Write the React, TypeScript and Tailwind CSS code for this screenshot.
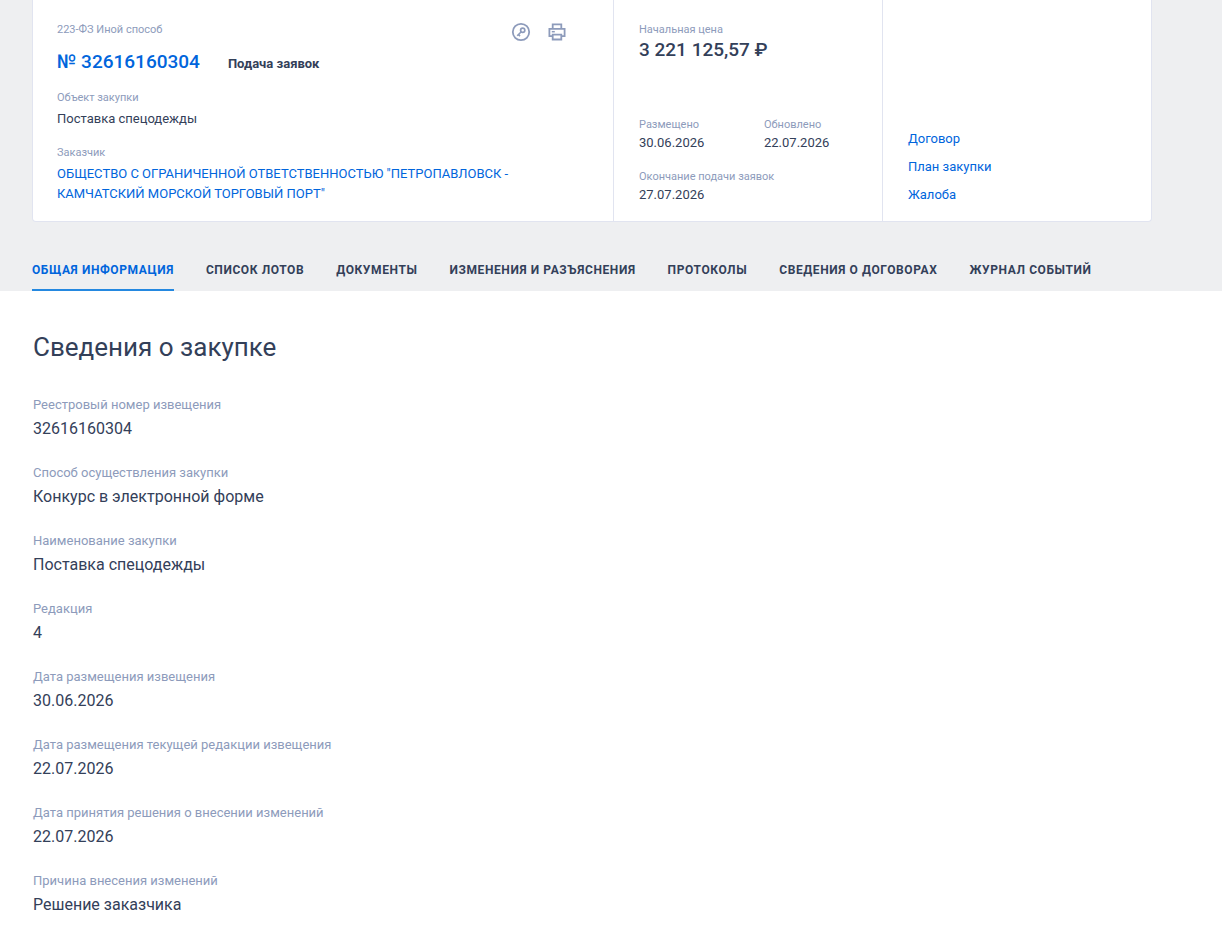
import type { ReactNode } from "react";

const tabs = [
  "Общая информация",
  "Список лотов",
  "Документы",
  "Изменения и разъяснения",
  "Протоколы",
  "Сведения о договорах",
  "Журнал событий",
];

const links = ["Договор", "План закупки", "Жалоба"];

const details = [
  { label: "Реестровый номер извещения", value: "32616160304" },
  { label: "Способ осуществления закупки", value: "Конкурс в электронной форме" },
  { label: "Наименование закупки", value: "Поставка спецодежды" },
  { label: "Редакция", value: "4" },
  { label: "Дата размещения извещения", value: "30.06.2026" },
  { label: "Дата размещения текущей редакции извещения", value: "22.07.2026" },
  { label: "Дата принятия решения о внесении изменений", value: "22.07.2026" },
  { label: "Причина внесения изменений", value: "Решение заказчика" },
];

function KeyIcon() {
  return (
    <svg width="20" height="20" viewBox="0 0 20 20" fill="none" stroke="currentColor">
      <circle cx="10" cy="10" r="8.2" strokeWidth="1.8" />
      <circle cx="11.7" cy="8.3" r="2.1" strokeWidth="1.7" />
      <path d="M10.3 9.7 6.2 13.8M7.3 12.4l1.7 1.7" strokeWidth="1.6" />
    </svg>
  );
}

function PrintIcon() {
  return (
    <svg width="20" height="20" viewBox="0 0 20 20" fill="none" stroke="currentColor" strokeWidth="1.8">
      <path d="M5.7 6.5V2.4h8.6v4.1" />
      <path d="M5.5 14.1H2.4V6.8h15.2v7.3h-3.1" />
      <path d="M5.7 12.6h8.6v4.9H5.7z" />
      <path d="M4.8 9.7h3" strokeWidth="1.5" />
    </svg>
  );
}

function Field({
  label,
  className,
  children,
}: {
  label: string;
  className?: string;
  children: ReactNode;
}) {
  return (
    <div className={className}>
      <dt className="text-[11px] leading-4 text-[#8d9bbb]">{label}</dt>
      <dd className="text-[13px] leading-5">{children}</dd>
    </div>
  );
}

export default function App() {
  return (
    <div className="min-h-screen bg-white font-['Roboto',sans-serif] text-[#334059]">
      <header className="bg-[#eeeff1] pr-[70px] pl-8">
        <section className="grid grid-cols-[1fr_269px_269px] rounded-b border border-t-0 border-[#e1e4f0] bg-white">
          <div className="px-6 pt-[22px] pb-[17px]">
            <div className="flex items-start justify-between pr-[22px]">
              <span className="text-[11px] leading-4 text-[#8d9bbb]">223-ФЗ Иной способ</span>
              <div className="flex h-5 gap-4 text-[#8d9bbb]">
                <button type="button" aria-label="Электронная подпись">
                  <KeyIcon />
                </button>
                <button type="button" aria-label="Печать">
                  <PrintIcon />
                </button>
              </div>
            </div>

            <div className="mt-2 flex items-baseline gap-7">
              <a href="#" className="text-[19px] leading-6 font-medium text-[#0065dc]">
                № 32616160304
              </a>
              <span className="text-[13px] leading-5 font-bold">Подача заявок</span>
            </div>

            <dl className="mt-4 flex flex-col gap-4">
              <Field label="Объект закупки" className="flex flex-col gap-[3px]">
                Поставка спецодежды
              </Field>
              <Field label="Заказчик" className="flex flex-col gap-[3px]">
                <a href="#" className="text-[#0065dc]">
                  ОБЩЕСТВО С ОГРАНИЧЕННОЙ ОТВЕТСТВЕННОСТЬЮ "ПЕТРОПАВЛОВСК - КАМЧАТСКИЙ МОРСКОЙ ТОРГОВЫЙ ПОРТ"
                </a>
              </Field>
            </dl>
          </div>

          <div className="flex flex-col justify-between border-l border-[#e1e4f0] px-[25px] pt-[22px] pb-4">
            <div>
              <div className="text-[11px] leading-4 text-[#8d9bbb]">Начальная цена</div>
              <div className="text-[19px] leading-6 font-medium">3 221 125,57 ₽</div>
            </div>
            <dl className="grid grid-cols-[125px_1fr] gap-y-4">
              <Field label="Размещено">30.06.2026</Field>
              <Field label="Обновлено">22.07.2026</Field>
              <Field label="Окончание подачи заявок" className="col-span-2">
                27.07.2026
              </Field>
            </dl>
          </div>

          <div className="flex flex-col items-start justify-end gap-2 border-l border-[#e1e4f0] px-[25px] pb-4">
            {links.map((link) => (
              <a key={link} href="#" className="text-[13px] leading-5 text-[#0065dc]">
                {link}
              </a>
            ))}
          </div>
        </section>

        <nav className="flex gap-8 pt-9">
          {tabs.map((tab, i) => (
            <a
              key={tab}
              href="#"
              className={
                i === 0
                  ? "border-b-2 border-[#2488e0] pt-1 pb-[11px] text-xs leading-4 font-bold tracking-wider whitespace-nowrap text-[#0065dc] uppercase"
                  : "border-b-2 border-transparent pt-1 pb-[11px] text-xs leading-4 font-bold tracking-wider whitespace-nowrap uppercase"
              }
            >
              {tab}
            </a>
          ))}
        </nav>
      </header>

      <main className="px-[33px] pt-10 pb-4">
        <h1 className="text-[26px] leading-8">Сведения о закупке</h1>
        <dl className="mt-8 flex flex-col gap-[22px]">
          {details.map(({ label, value }) => (
            <div key={label} className="flex flex-col gap-0.5">
              <dt className="text-[13px] leading-5 text-[#8d9bbb]">{label}</dt>
              <dd className="text-base">{value}</dd>
            </div>
          ))}
        </dl>
      </main>
    </div>
  );
}
